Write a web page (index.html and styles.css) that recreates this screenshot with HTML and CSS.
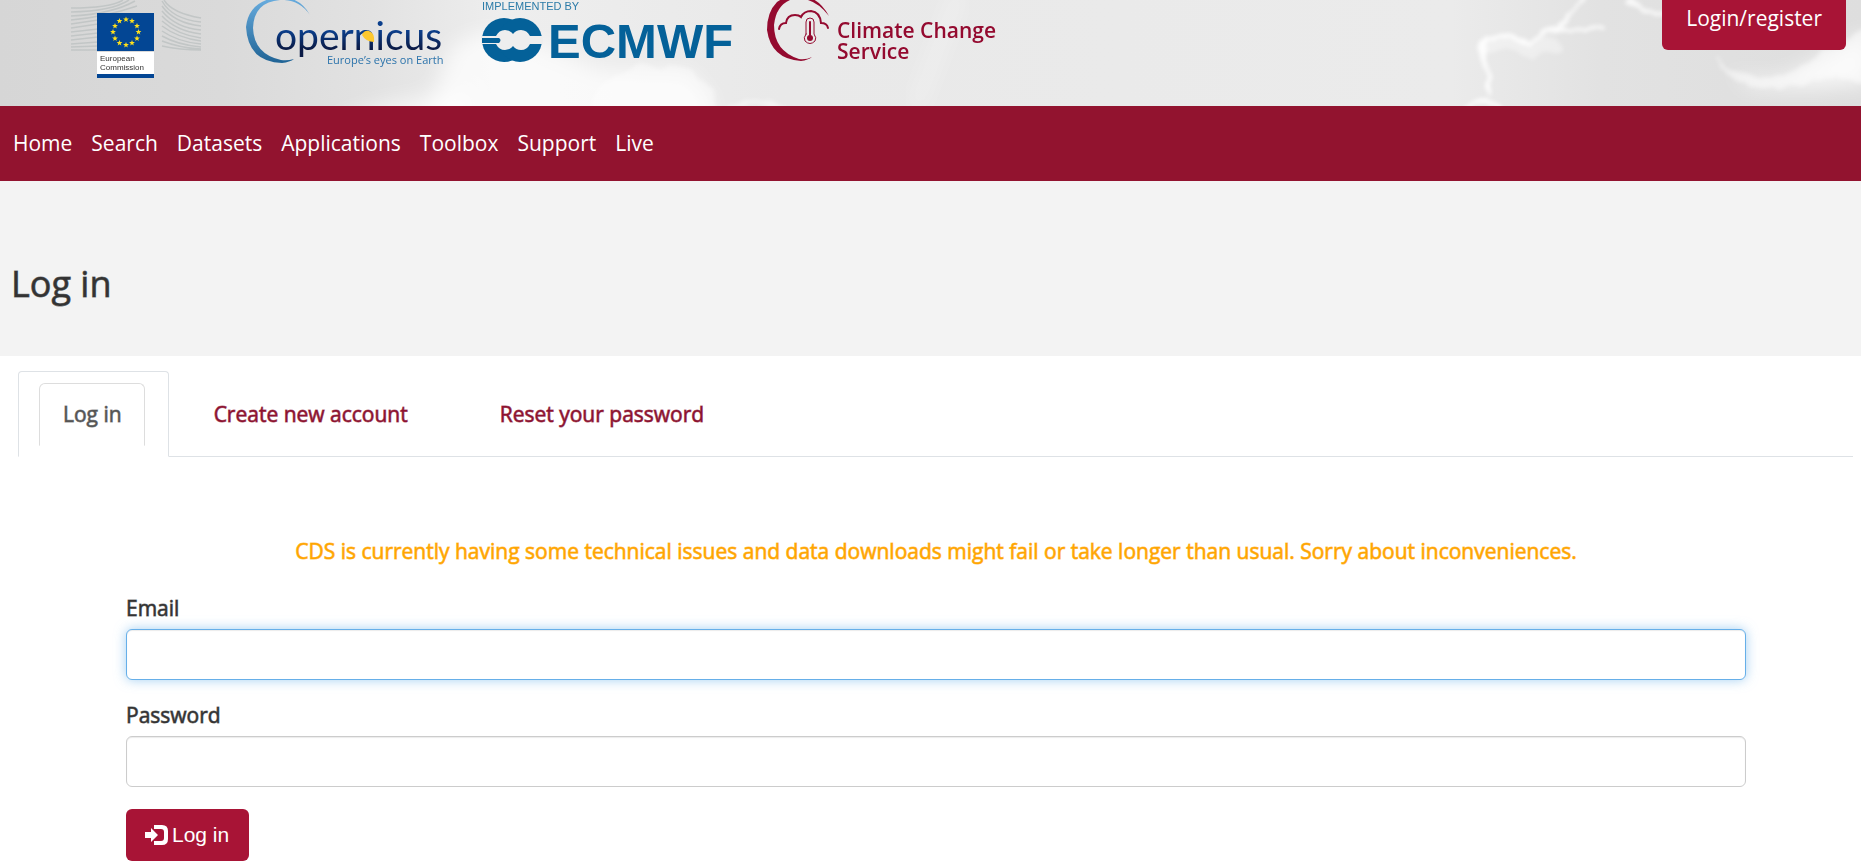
FILE: index.html
```html
<!DOCTYPE html>
<html lang="en">
<head>
<meta charset="utf-8">
<title>Log in</title>
<link rel="stylesheet" href="styles.css">
</head>
<body>
<header class="banner">
  <svg class="clouds" viewBox="0 0 1861 106" preserveAspectRatio="xMidYMid slice" aria-hidden="true">
    <defs>
      <linearGradient id="sky" x1="0" x2="1" y1="0" y2="0">
        <stop offset="0" stop-color="#d6d6d6"/><stop offset=".12" stop-color="#dadada"/>
        <stop offset=".2" stop-color="#e2e2e2"/><stop offset=".27" stop-color="#eeeeee"/>
        <stop offset=".42" stop-color="#e9e9e9"/><stop offset=".78" stop-color="#ebebeb"/>
        <stop offset=".86" stop-color="#e2e2e2"/><stop offset="1" stop-color="#dedede"/>
      </linearGradient>
      <filter id="soft" x="-20%" y="-50%" width="140%" height="200%"><feGaussianBlur stdDeviation="10"/></filter>
      <filter id="edge" x="-20%" y="-50%" width="140%" height="200%">
        <feTurbulence type="fractalNoise" baseFrequency=".06" numOctaves="3" seed="4" result="n"/>
        <feDisplacementMap in="SourceGraphic" in2="n" scale="10" xChannelSelector="R" yChannelSelector="G"/>
        <feGaussianBlur stdDeviation="2"/>
      </filter>
    </defs>
    <rect width="1861" height="106" fill="url(#sky)"/>
    <g filter="url(#soft)" fill="#fff">
      <path d="M420 130L450 50Q480 20 530 40L600 70 690 72 712 100V130z" opacity=".7"/>
      <path d="M1712 56Q1740 88 1790 74Q1820 58 1870 30V84Q1810 92 1750 88z" opacity=".7"/>
      <path d="M330 125Q380 96 470 92V130H330z" opacity=".6"/>
    </g>
    <g filter="url(#edge)" fill="#fff">
      <path d="M590 112Q592 82 622 74Q640 60 662 68Q690 62 700 80Q716 92 716 112z" opacity=".4"/>
      <path d="M1716 54Q1726 72 1748 76Q1776 78 1796 70Q1812 58 1824 50Q1846 44 1866 26V82Q1830 74 1800 86Q1760 92 1738 80Q1718 72 1716 54z" opacity=".5"/>
    </g>
    <g filter="url(#edge)" fill="none" stroke="#fff" stroke-linecap="round">
      <path d="M1464 112Q1484 90 1502 112M1488 94V72Q1480 58 1484 42Q1488 36 1504 37T1530 44Q1540 32 1556 28L1576 8 1586 -4M1556 30L1602 28" stroke-width="4" opacity=".9"/>
      <path d="M1630 0Q1648 12 1666 14" stroke-width="5" opacity=".8"/>
      <path d="M1490 44Q1510 40 1530 50Q1544 40 1556 46" stroke-width="14" opacity=".35"/>
      <path d="M728 110Q760 94 784 110" stroke-width="5" opacity=".5"/>
    </g>
    <path d="M960 -10L915 110" stroke="#fff" stroke-width="14" opacity=".3" filter="url(#soft)"/>
  </svg>
  <div class="banner-row">
    <a class="logos" href="#" aria-label="Climate Data Store home">
      <svg class="logo-art" viewBox="0 0 1000 106" role="img" aria-label="European Commission, Copernicus, ECMWF, Climate Change Service">
        <defs>
          <linearGradient id="arc" x1="0" x2="0" y1="0" y2="1"><stop offset="0" stop-color="#6aaee0"/><stop offset="1" stop-color="#1f6395"/></linearGradient>
          <linearGradient id="navy" x1="0" x2="0" y1="0" y2="1"><stop offset=".4" stop-color="#0b3f8c"/><stop offset=".8" stop-color="#0b1b46"/></linearGradient>
          <path id="star" d="M0-3L.8-.9 2.9-.9 1.2.4 1.8 2.4 0 1.2-1.8 2.4-1.2.4-2.9-.9-.8-.9z" fill="#ffe01b"/>
        </defs>
        <g fill="none" stroke="#c2c6c6" stroke-width="1.500">
          <path d="M71 8Q110 8 123 0M71 12Q112 11 129 0M71 16Q112 14 135 1M71 20Q105 17 137 6M71 24L98 20M71 28L98 24M71 32L98 29M71 36L98 33M71 40L98 37M71 44L98 42M71 47L98 46M71 50H98"/>
          <path d="M164 0Q172 13 201 18M162 1Q172 19 201 22M162 6Q174 23 201 26M162 11Q176 28 201 30M162 16Q176 31 201 34M162 21Q178 35 201 38M162 26Q178 38 201 41M162 31Q178 42 201 44M162 36Q178 45 201 47M162 41Q180 48 201 49M162 46Q180 50 201 50"/>
        </g>
        <rect x="97" y="13" width="57" height="38" fill="#034694"/>
        <g>
          <use href="#star" x="126" y="19.500"/><use href="#star" x="132" y="21"/><use href="#star" x="137" y="26"/><use href="#star" x="138.500" y="32"/><use href="#star" x="137" y="38.500"/><use href="#star" x="132" y="43"/><use href="#star" x="126" y="45"/><use href="#star" x="119.500" y="43"/><use href="#star" x="115" y="38.500"/><use href="#star" x="113" y="32"/><use href="#star" x="115" y="26"/><use href="#star" x="119.500" y="21"/>
        </g>
        <rect x="97" y="52" width="57" height="22" fill="#fff"/>
        <rect x="97" y="74" width="57" height="4" fill="#034694"/>
        <text class="logo-ec" x="100" y="61">European</text>
        <text class="logo-ec" x="100" y="70">Commission</text>

        <path d="M310 15Q300-3 280-3Q249 0 246 27Q248 62 282 63Q290 62 294 59Q287 61 281 60Q254 54 253 28Q254 2 280 0Q299-1 310 15z" fill="url(#arc)"/>
        <text class="logo-cop" x="275" y="50" fill="url(#navy)">opernicus</text>
        <path d="M362 35Q364 30 369 31Q375 33 374 42Q366 42 362 35z" fill="#fdc82f"/>
        <text class="logo-eyes" x="327" y="64">Europe’s eyes on Earth</text>

        <text class="logo-impl" x="482" y="10">IMPLEMENTED BY</text>
        <g fill="#046199"><circle cx="504" cy="40" r="22"/><circle cx="520" cy="40" r="22"/></g>
        <path d="M481 36H496Q499 30 505 30Q510 30 513 34Q516 30 521 30Q527 30 530 36H543V44H530Q527 50 521 50Q516 50 513 46Q510 50 505 50Q499 50 496 44H481z" fill="#eee"/>
        <path d="M482 38H499Q502 40 499 43H482z" fill="#046199"/>
        <text class="logo-ecmwf" x="548" y="58">ECMWF</text>

        <path d="M829 16Q818-4 800-4Q785-4 777 2Q767 12 767 30Q771 59 801 61Q808 60 812 57Q806 60 799 59Q774 51 774 25Q776 6 790 0Q812-6 829 16z" fill="#940a2f"/>
        <g fill="none" stroke="#940a2f" stroke-width="2" stroke-linecap="round">
          <path d="M779 29Q780 23 786 23Q787 15 795 15Q799 15 801 17Q804 11 811 11Q820 12 821 23Q827 23 828 28"/>
          <path d="M806 34V22Q806 18 810 18T814 22V34Q817 38 815 41Q810 46 805 41Q803 38 806 34z" stroke-width="1"/>
          <path d="M810 22V35"/>
        </g>
        <circle cx="810" cy="38" r="3" fill="#940a2f"/>
        <text class="logo-c3s" x="837" y="38">Climate Change</text>
        <text class="logo-c3s" x="837" y="59">Service</text>
      </svg>
    </a>
    <a class="login-link" href="#">Login/register</a>
  </div>
</header>

<nav class="nav" aria-label="Main">
  <a href="#">Home</a>
  <a href="#">Search</a>
  <a href="#">Datasets</a>
  <a href="#">Applications</a>
  <a href="#">Toolbox</a>
  <a href="#">Support</a>
  <a href="#">Live</a>
</nav>

<div class="title-band"><h1>Log in</h1></div>

<main>
  <ul class="tabs">
    <li class="tab tab-active"><a href="#" aria-current="page">Log in</a></li>
    <li class="tab"><a href="#">Create new account</a></li>
    <li class="tab"><a href="#">Reset your password</a></li>
  </ul>
  <form class="form">
    <p class="notice">CDS is currently having some technical issues and data downloads might fail or take longer than usual. Sorry about inconveniences.</p>
    <div class="field">
      <label for="email">Email</label>
      <input class="focused" id="email" type="text">
    </div>
    <div class="field">
      <label for="password">Password</label>
      <input id="password" type="password">
    </div>
    <button class="submit" type="submit">
      <svg class="submit-icon" viewBox="0 0 23 20" aria-hidden="true"><path d="M0 7H6V3L13 10 6 17V13H0z M9 0H17Q23 0 23 6V14Q23 20 17 20H9V16H16Q19 16 19 13V7Q19 4 16 4H9z" fill="currentColor"/></svg>
      <span>Log in</span>
    </button>
  </form>
</main>
</body>
</html>
```

FILE: styles.css
```css
* { box-sizing: border-box; }

body {
  margin: 0;
  font-family: "Open Sans", "Liberation Sans", sans-serif;
  font-size: 21px;
  line-height: 30px;
  color: #333;
  background: #fff;
}

a { color: inherit; text-decoration: none; }

.title-band h1,
.tab a,
.notice,
.field label {
  -webkit-text-stroke: 1px color-mix(in srgb, currentColor 65%, transparent);
}

.banner { position: relative; overflow: hidden; background: #e4e4e4; }
.clouds { position: absolute; inset: 0; width: 100%; height: 100%; }
.banner-row {
  position: relative;
  display: flex;
  justify-content: space-between;
  align-items: flex-start;
  padding-right: 15px;
}
.logos { display: block; }
.logo-art { display: block; width: 1000px; height: 106px; }

.logo-ec { font: 8px "Liberation Sans", sans-serif; fill: #333; }
.logo-cop { font: 39px Lato, sans-serif; }
.logo-eyes { font: 11px "Open Sans", sans-serif; fill: #2b73ab; }
.logo-impl { font: 11px "Liberation Sans", sans-serif; fill: #2b7ba8; }
.logo-ecmwf { font: bold 49px "Liberation Sans", sans-serif; fill: #046199; }
.logo-c3s { font: 600 21px "Open Sans", sans-serif; fill: #940a2f; }

.login-link {
  padding: 3px 24px 17px;
  border-radius: 0 0 6px 6px;
  background: #a81436;
  color: #fff;
}

.nav {
  display: flex;
  gap: 19px;
  padding: 22px 13px 23px;
  background: #92132f;
  color: #fff;
}

.title-band { padding: 81px 11px 50px; background: #f3f3f3; }
.title-band h1 { margin: 0; font-size: 36px; font-weight: 400; line-height: 44px; }

.tabs {
  display: flex;
  margin: 15px 8px 0 18px;
  padding: 0;
  list-style: none;
  border-bottom: 1px solid #dee2e6;
}
.tab { padding: 11px 23px 9px 20px; border: 1px solid transparent; }
.tab a {
  display: block;
  padding: 15px 22px 16px 23px;
  border: 1px solid transparent;
  color: #8c1230;
}
.tab-active {
  margin-bottom: -1px;
  border-color: #dee2e6 #dee2e6 #fff;
  border-radius: 4px 4px 0 0;
  background: #fff;
}
.tab-active a {
  border-color: #ddd #ddd transparent;
  border-radius: 6px 6px 0 0;
  color: #555;
}

.form { margin: 0 115px 0 126px; padding-top: 79px; }
.notice { margin: 0 0 27px; text-align: center; color: #ffa500; }
.field { display: flex; flex-direction: column; gap: 6px; margin-bottom: 20px; }
.field input {
  width: 100%;
  height: 51px;
  padding: 8px 16px;
  border: 1px solid #ccc;
  border-radius: 6px;
  outline: 0;
  background: #fff;
  font: inherit;
  box-shadow: inset 0 1px 1px rgba(0, 0, 0, .08);
}
.field .focused {
  border-color: #66afe9;
  box-shadow: inset 0 1px 1px rgba(0, 0, 0, .08), 0 0 12px rgba(102, 175, 233, .6);
}
.submit {
  display: flex;
  align-items: center;
  gap: 4px;
  height: 52px;
  margin-top: 22px;
  padding: 0 20px 0 19px;
  border: 0;
  border-radius: 6px;
  background: #a81436;
  color: #fff;
  font: 21px "Liberation Sans", sans-serif;
}
.submit-icon { width: 23px; height: 20px; }
```
